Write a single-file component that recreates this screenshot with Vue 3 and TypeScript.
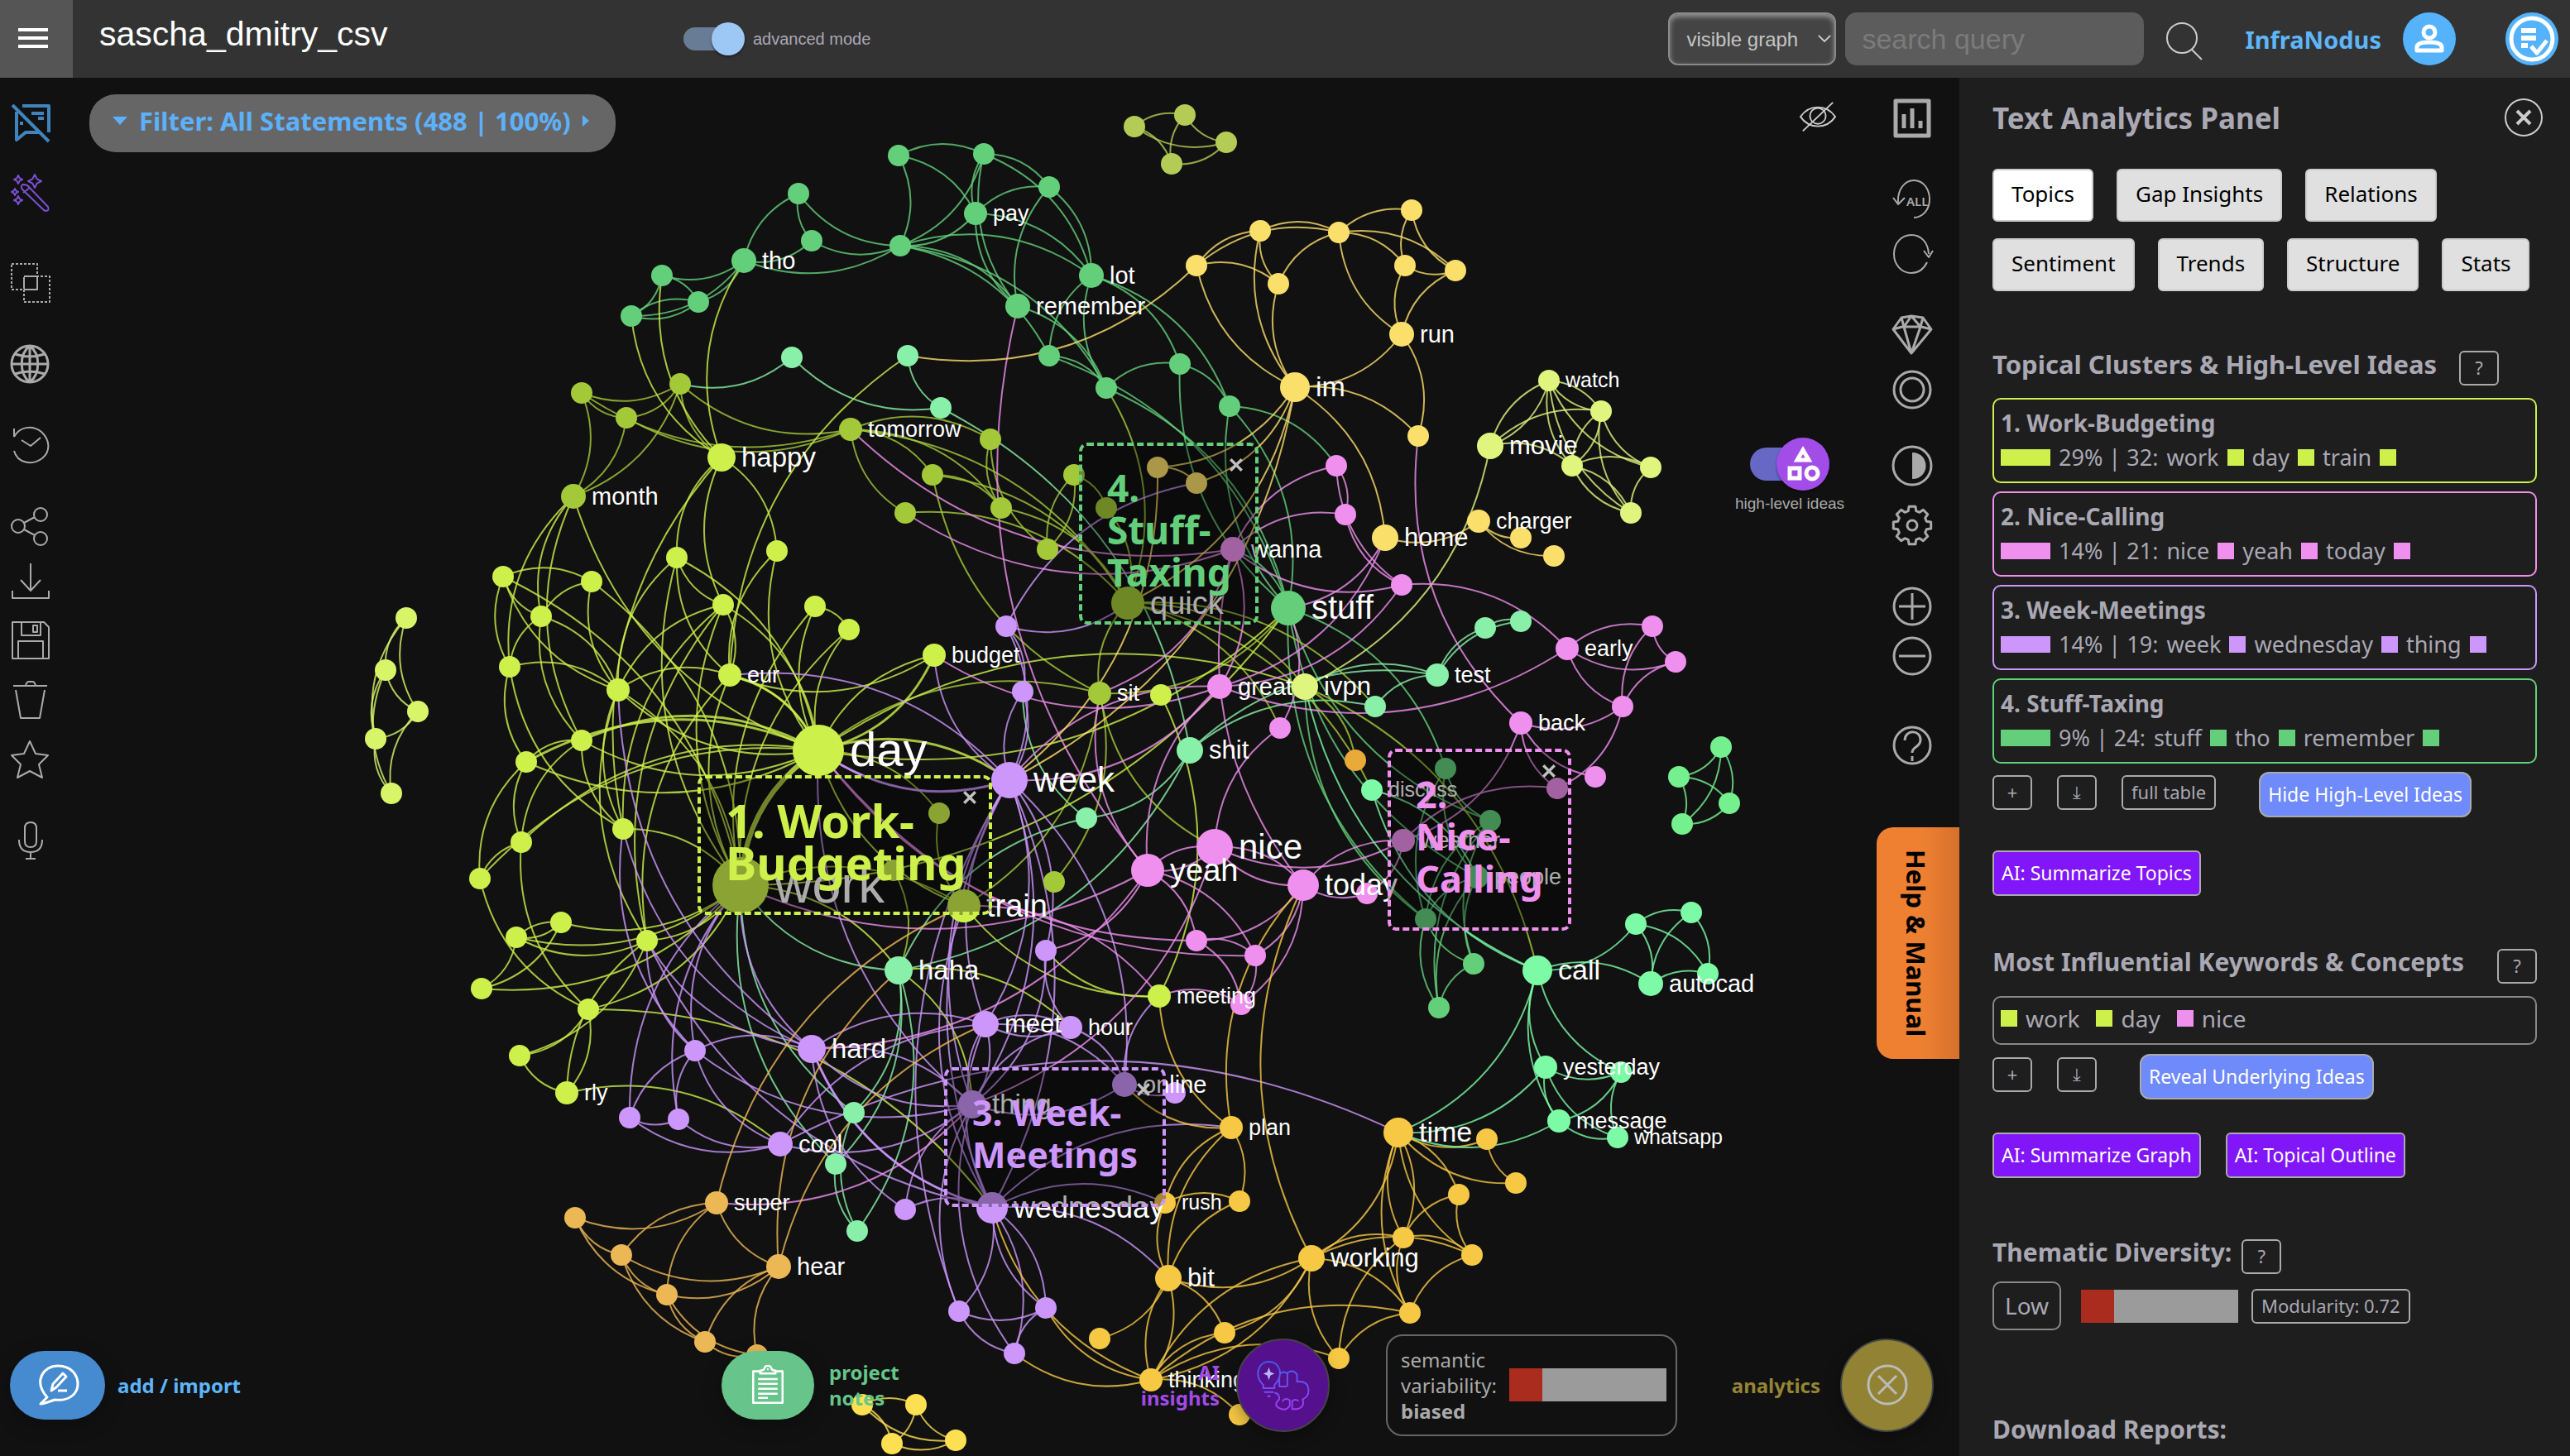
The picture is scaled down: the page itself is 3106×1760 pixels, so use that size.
<script setup lang="ts">
import { ref } from 'vue'

interface GraphNode { id: string; x: number; y: number; r: number; color: string; label?: string }
interface GraphEdge { d: string; color: string; w: number }
interface Tool { name: string; gap: string; d: string; dash?: string; fill?: string; text?: string; tone?: string; w?: number }
interface Cluster { title: string; share: string; words: string[]; color: string }

// Camera zoom applied to the layout coordinates of the graph.
const ZOOM = 1.981

const C = {
  olive: '#a4c938', lime: '#cdf04b', green: '#64cf7b', mint: '#88f0a8', aqua: '#7cfaa6',
  yellow: '#fbdf6b', lemon: '#dff57d', gold: '#f6c844', amber: '#ecb855', pink: '#ef8fee',
  violet: '#cc96fb', moss: '#b4cc55', pear: '#d8f56a', leaf: '#75f08f', orange: '#e9aa3a', sun: '#fde052',
}

// "id x y [radius label]" separated by commas, one list per community.
const layout: [string, string][] = [
  [C.moss, 'A1 692 77,A2 723 70,A3 748 87,A4 715 100'],
  [C.pear, 'c1 248 377,c2 235 409,c3 255 434,c4 229 451,c5 239 484'],
  [C.leaf, 'r1 1050 456,r2 1024 474,r3 1055 490,r4 1026 503'],
  [C.sun, 'b1 526 857,b2 559 857,b3 544 881,b4 583 879'],
  [C.green, 'g1 487 118,g2 495 147,tho 454 159 15 tho,g3 404 168,g4 426 184,g5 385 193,g6 548 95,g7 549 150,g8 600 94,pay 595 130 14 pay,g9 640 114,lot 666 168 15 lot,rem 621 187 15 remember,g10 640 217,g11 720 222,g12 675 237,g13 750 248,stuff 786 371 21 stuff,h1 882 469,h2 909 501,h3 901 535 14 people,h4 870 561,h5 899 588,h6 878 615'],
  [C.mint, 'm1 483 218,m2 554 217,m3 574 249,shit 726 458 16 shit,haha 548 592 17 haha,m4 663 499,m5 521 679,m6 510 710,m7 523 751,test 877 412 14 test,t1 906 383,t2 928 379,t3 839 431'],
  [C.olive, 'o1 415 234,o2 355 240,o3 382 255,month 350 303 15 month,tom 519 262 14 tomorrow,o5 569 290,o6 604 268,o7 552 313,o8 611 310,o9 655 290,o10 639 335,o11 675 310,quick 688 368 20 quick,sit 671 423 14 sit,o12 643 538'],
  [C.lime, 'happy 440 279 17 happy,l1 307 352,l2 361 355,l3 330 376,l4 311 407,l5 413 340,l6 474 336,l7 441 369,l8 497 370,l9 518 384,eur 445 412 14 eur,l10 377 421 14,budget 570 400 14 budget,day 499 458 31 day,l11 355 452,l12 321 465,l13 318 514,l14 380 506,l15 293 536,l16 342 563,l17 315 572,l18 395 574,l19 294 603,l20 359 616,l21 317 644,rly 346 667 14 rly,work 452 540 34 work,train 588 553 20 train,l22 573 496,l24 545 531,l23 708 424,meeting 707 608 14 meeting'],
  [C.lemon, 'ivpn 796 419 16 ivpn,watch 945 232 13 watch,v1 977 251,movie 909 272 16 movie,v2 959 284,v3 1007 285,v4 995 313'],
  [C.violet, 'u1 614 382,u2 624 422,week 616 476 22 week,u3 638 580,meet 601 625 16 meet,hour 653 627 14 hour,u4 717 667,online 686 662 15 online,thing 593 674 17 thing,wed 605 737 19 wednesday,hard 495 640 17 hard,u5 424 641,u6 384 682,u7 414 683,cool 476 698 15 cool,u8 552 738,u9 585 800,u10 638 798,u11 619 826'],
  [C.pink, 'p1 815 284,p2 821 314,wanna 752 335 15 wanna,p3 855 357,great 744 419 15 great,p4 781 444,early 956 396 14 early,p5 1008 382,p6 1022 404,p7 990 431,back 928 441 14 back,p8 973 474,p9 950 481,wea 856 513 14 weather,p10 834 545,yeah 700 531 20 yeah,nice 741 517 22 nice,today 795 540 19 today,p11 730 574,p12 766 583,p13 757 613'],
  [C.yellow, 'y1 730 162,y2 769 141,y3 817 142,y4 861 128,y5 857 162,y6 888 165,y7 780 173,run 855 204 15 run,im 790 236 18 im,y8 865 266,home 845 328 16 home,charger 902 318 14 charger,y9 928 328,y10 948 339,y11 706 285,y12 730 295'],
  [C.gold, 'time 853 691 18 time,k1 907 695,k2 925 722,k3 890 729,k4 898 766,working 800 768 16 working,k5 856 755,k6 860 801,k7 817 829,plan 751 688 14 plan,rush 711 734 13 rush,k8 756 733,bit 713 780 16 bit,k9 671 817,k10 747 813,think 702 842 14 thinking,k11 756 863'],
  [C.amber, 'super 437 734 14 super,q1 351 743,q2 379 766,q3 407 790,q4 430 819,q5 462 827,hear 475 773 15 hear'],
  [C.orange, 'f1 827 464'],
  [C.aqua, 'disc 837 482 13 discuss,call 938 592 18 call,e1 998 564,e2 1032 557,e3 1042 594,aut 1007 600 15 autocad,yes 943 651 14 yesterday,e4 989 654,msg 951 684 14 message,wh 987 694 13 whatsapp'],
]

const nodes: GraphNode[] = layout.flatMap(([color, list]) =>
  list.split(',').map((item) => {
    const [id, x, y, r, label] = item.split(' ')
    return { id, x: Math.round(+x * ZOOM), y: Math.round(+y * ZOOM), r: r ? +r : 13, color, label }
  }),
)
const byId = new Map(nodes.map((n) => [n.id, n]))

// "source>target" pairs; each curve bends to the left of its direction.
const links: [string, string, number?][] = [
  [C.moss, 'A1>A2 A3>A2 A3>A1 A1>A4 A4>A2 A3>A4'],
  [C.pear, 'c2>c1 c3>c1 c4>c1 c3>c2 c4>c2 c3>c4 c5>c4 c5>c2 c5>c3'],
  [C.leaf, 'r1>r2 r1>r3 r1>r4 r2>r3 r2>r4 r3>r4'],
  [C.sun, 'b1>b2 b1>b3 b4>b1 b2>b3 b4>b2 b4>b3'],
  [C.green, 'tho>g1 g2>g1 g7>g1 g7>g2 g2>tho g7>tho tho>g3 tho>g4 tho>g5 g3>g4 g3>g5 g5>g4 g4>g5 g6>g7 g6>g8 g6>pay pay>g8 rem>g8 g8>g9 g8>lot g9>lot pay>g9 pay>lot pay>g7 g8>g7 g7>lot g7>rem g7>g10 g7>g12 rem>g9 rem>pay g10>lot g12>lot lot>g11 lot>g13 g10>g12 rem>g12 g12>g11 g11>g13 g13>p1 stuff>g13 g13>stuff g12>stuff g10>stuff stuff>g11 wanna>stuff stuff>h1 h4>stuff h4>ivpn h2>h1 h3>h1 h2>stuff h3>stuff h4>h1 h4>h2 h4>h3 h6>h4 h6>h3 h6>h2 h5>h3 h5>h2 h5>h4 h6>h5'],
  [C.mint, 'm1>o1 m3>m1 m3>m2 m3>shit shit>m4 m4>u2 haha>m4 haha>m5 haha>m6 haha>m7 m5>work m6>work m7>m5 m7>m6 test>t1 test>t2 t1>t2 t3>test shit>t3 shit>test ivpn>test haha>work shit>haha'],
  [C.olive, 'o1>o2 o1>o3 o3>o2 tom>o1 tom>o3 tom>o2 happy>o1 o2>month o3>month o1>month tom>o6 tom>o5 o7>tom tom>o8 o5>o8 o8>o6 o8>quick o5>quick tom>quick o7>quick o10>o6 o9>o10 o10>o9 o11>quick o9>o11 sit>o5 quick>ivpn quick>t3 quick>disc ivpn>call ivpn>f1 sit>o12 sit>quick stuff>sit sit>train day>sit train>l22 work>train l24>haha nice>sit quick>p4 g12>quick day>l22'],
  [C.lime, 'happy>tho happy>g3 happy>g5 l5>happy l7>happy happy>l6 l14>happy eur>m2 l4>month l3>month day>month l11>month l1>l2 l3>l2 l3>l1 l4>l1 l4>l3 l4>l10 l3>l10 l10>l1 l10>l2 l1>work l2>work l14>l4 l12>l4 l11>l3 day>l11 day>l12 l12>l11 l13>l11 l13>l12 l15>l13 l15>l12 l14>l10 l14>l11 l18>l10 l10>eur l10>l7 l10>l5 l7>eur eur>l5 l7>l5 l18>l7 l14>l7 eur>l6 l5>day l7>day day>l6 day>l8 day>l9 l8>l9 eur>day l13>day l15>day day>l10 budget>eur day>budget l10>work work>l5 work>l7 work>l8 work>l9 work>eur l14>work work>l16 work>l17 work>l18 l18>l17 l17>l16 l16>l17 l17>l19 l16>l19 work>l19 work>l20 l18>l21 l20>l15 l20>l13 l20>l21 l20>rly rly>l18 rly>l21 rly>cool l18>eur l20>wed train>day work>haha meeting>train meeting>u3 l23>meeting stuff>day stuff>work day>ivpn haha>thing haha>hour'],
  [C.lime, 'l12>day l11>day eur>day day>week budget>day', 3],
  [C.lime, 'work>day', 6],
  [C.lemon, 'watch>v1 v1>watch movie>v1 movie>watch watch>movie movie>v2 v2>watch v3>watch v2>v3 v2>v4 v4>v2 v1>v2 v2>v1 v3>v1 v4>v1 v4>v3 v4>watch movie>ivpn'],
  [C.violet, 'u1>u2 u1>week u2>week week>u2 u1>y12 quick>u1 week>budget week>day thing>week week>thing wed>week week>wed week>online week>meet meet>week week>u3 u3>thing hour>u3 u5>hard cool>u6 cool>u7 u7>u6 u6>u5 u7>u5 cool>u5 thing>u5 hard>thing thing>hard wed>hard cool>time thing>cool u8>thing u8>hard u8>wed wed>plan wed>bit wed>rush u10>wed wed>u10 wed>u11 wed>u9 u9>thing u9>week u11>thing u10>u9 u11>u9 u11>u10 online>thing hour>online meet>online hour>meet meet>hour thing>hour thing>meet meet>thing wed>meet hard>work u5>work u6>work u7>work hard>l10 u5>l14 hard>l18 hard>l14 u5>l18 thing>day wed>l18 eur>week wed>train hard>meet cool>meet u4>online online>meeting'],
  [C.violet, 'wed>hard week>day', 3],
  [C.pink, 'wanna>p1 p1>p2 wanna>p2 p3>p2 p3>p1 p3>wanna p3>early p3>great home>great back>y8 early>p5 p6>p5 p6>early p7>p5 p7>p6 p7>early p7>back p7>p9 p9>back p8>back back>wea wea>p9 wea>nice today>wea early>great stuff>p4 nice>p4 yeah>great great>week great>budget nice>today today>nice yeah>nice nice>yeah p10>today wea>p10 p11>day p12>day p11>p12 today>p11 today>p12 yeah>p11 yeah>p12 p12>p13 p11>p13 today>p13 meeting>p13 wanna>tom wanna>o7 yeah>rem today>wanna wanna>great wanna>sit yeah>work yeah>u3 nice>thing thing>super yeah>hard week>great train>meeting home>stuff yeah>sit'],
  [C.yellow, 'y1>y2 y1>y3 y1>y7 y2>y3 y7>y2 im>y2 im>y7 im>y1 y7>y3 y3>y4 y3>y5 y3>y6 y5>y4 y6>y4 y6>y5 run>y5 run>y6 run>y3 run>im run>y8 im>y8 im>home im>y11 im>y12 im>week y11>week charger>home y9>charger y10>charger y11>y12 y1>m2 im>quick'],
  [C.gold, 'k1>time k2>time k2>k1 time>k3 k5>k3 k4>k3 k4>time k5>time k6>time k5>k4 working>k4 working>k5 time>working time>k5 k7>k5 k6>k5 k6>k4 working>k6 k7>working k7>k6 think>k6 think>k7 think>working working>think working>bit think>bit bit>think bit>k9 bit>k10 think>k10 working>k10 bit>plan rush>k8 plan>k8 bit>k8 bit>rush rush>plan plan>online plan>meeting plan>today working>today think>u10 think>wed think>u11 think>k11'],
  [C.amber, 'super>q1 q2>super q3>super hear>super hear>q2 hear>q3 q4>hear q5>hear q2>q1 q3>q1 q3>q2 q4>q2 q4>q3 q5>q3 q5>q4 super>train hear>haha hear>meet'],
  [C.aqua, 'e1>call call>aut e1>e2 e1>e3 e1>aut aut>e2 e2>e3 aut>e3 yes>call msg>call e4>call call>time yes>time msg>time e4>yes msg>yes wh>yes wh>msg wh>e4 e4>msg call>disc call>ivpn disc>h3'],
]

const edges: GraphEdge[] = links.flatMap(([color, pairs, w]) =>
  pairs.split(' ').flatMap((pair) => {
    const [s, t] = pair.split('>').map((id) => byId.get(id))
    if (!s || !t) return []
    const cx = Math.round((s.x + t.x) / 2 + (t.y - s.y) / 4)
    const cy = Math.round((s.y + t.y) / 2 + (s.x - t.x) / 4)
    return [{ d: `M${s.x} ${s.y}Q${cx} ${cy} ${t.x} ${t.y}`, color, w: w ?? 2 }]
  }),
)
const labelled = nodes.filter((n) => n.label)
const labelSize = (n: GraphNode) => Math.round(n.r * 1.8 + 2)

const ideas = [
  { text: ['1. Work-', 'Budgeting'], x: 843, y: 843, w: 356, size: 56, color: C.lime },
  { text: ['2.', 'Nice-', 'Calling'], x: 1677, y: 811, w: 222, size: 45, color: C.pink },
  { text: ['3. Week-', 'Meetings'], x: 1141, y: 1196, w: 268, size: 43, color: C.violet },
  { text: ['4.', 'Stuff-', 'Taxing'], x: 1304, y: 441, w: 217, size: 46, color: C.green },
]

const circle = (cx: number, cy: number, r: number) => `M${cx - r} ${cy}a${r} ${r} 0 1 0 ${2 * r} 0a${r} ${r} 0 1 0 ${-2 * r} 0z`

function gear(): string {
  const pts: string[] = []
  for (let i = 0; i < 8; i++) {
    const a = (i * Math.PI) / 4
    for (const [o, r] of [[-0.27, 18], [-0.17, 23], [0.17, 23], [0.27, 18]]) {
      pts.push(`${(24 + r * Math.sin(a + o)).toFixed(1)} ${(24 - r * Math.cos(a + o)).toFixed(1)}`)
    }
  }
  return `M${pts.join('L')}Z${circle(24, 24, 6)}`
}
const star = (x: number, y: number, r: number) => `M${x} ${y - r}L${x + r / 3} ${y - r / 3}L${x + r} ${y}L${x + r / 3} ${y + r / 3}L${x} ${y + r}L${x - r / 3} ${y + r / 3}L${x - r} ${y}L${x - r / 3} ${y - r / 3}Z`

const leftTools: Tool[] = [
  { name: 'Hide statements', gap: '', tone: 'blue', w: 4, d: 'M14 3H46V35M34 35H18L7 44V10M2 2L46 46M25 12H40M33 18H40M13 22V26' },
  { name: 'AI tools', gap: 'gap-l', tone: 'purple', d: `M13 17Q12 13 16 13L20 14L45 40Q47 45 42 45L40 44L14 19ZM15 23L23 17${star(29, 9, 8)}${star(9, 7, 5)}${star(5, 22, 4)}${star(9, 32, 5)}` },
  { name: 'Overlap', gap: 'gap-xxl', dash: '3 2', d: 'M1 1H32V32H1ZM16 16H47V47H16Z', fill: 'M17 15H31V17H17ZM17 31H31V33H17ZM15 17H17V31H15ZM31 17H33V31H31Z' },
  { name: 'Import from web', gap: 'gap-xl', w: 3, d: `${circle(23, 24, 22)}M23 2V46M1 24H45M23 2C10 12 10 36 23 46M23 2C36 12 36 36 23 46M5 12Q23 18 41 12M5 36Q23 30 41 36` },
  { name: 'History', gap: 'gap-xl', d: 'M4 4V14M4 14C10 2 26 -1 37 8C48 18 48 32 38 40C26 49 8 46 4 31M13 18L24 25L36 15' },
  { name: 'Share', gap: 'gap-xl', d: `${circle(9, 24, 8)}${circle(36, 10, 8)}${circle(36, 39, 8)}M16 20L29 13M16 28L29 35` },
  { name: 'Download', gap: 'gap-sm', d: 'M24 3V36M12 23L24 36L36 23M2 36V45H46V36' },
  { name: 'Save', gap: 'gap-m', d: 'M2 2H40L46 8V46H2ZM13 2V18H36V2M27 6H32V14H27ZM9 46V25H39V46' },
  { name: 'Delete', gap: 'gap-m', d: 'M3 7H44M18 7Q19 2 22 2H26Q29 2 30 7M6 12L12 46H35L41 12' },
  { name: 'Favourite', gap: 'gap-m', d: 'M23 2L30 17L45 19L34 30L38 46L23 38L8 46L12 30L1 19L16 17Z' },
  { name: 'Dictate', gap: 'gap-xl', d: 'M24 2Q31 2 31 9V25Q31 32 24 32Q17 32 17 25V9Q17 2 24 2ZM10 23Q10 38 24 38Q38 38 38 23M24 38V46M18 46H30' },
]
const rightTools: Tool[] = [
  { name: 'Charts', gap: '', w: 5, d: 'M4 3H44V45H4ZM14 19V36M24 12V36M34 27V36' },
  { name: 'Reset all', gap: 'gap-xl', text: 'ALL', d: 'M7 28C6 12 15 1 26 1C38 1 45 12 45 24C45 37 36 46 26 46M1 22L7 30L15 22' },
  { name: 'Redo', gap: 'gap-sm', d: 'M42 34C37 44 30 47 23 47C11 47 2 37 2 24C2 11 11 1 23 1C34 1 43 9 44 24M38 20L44 28L49 20' },
  { name: 'Reveal gems', gap: 'gap-xl', w: 3, d: 'M1 17L11 3L23 1L37 3L47 17L23 46ZM1 17L12 14H35L47 17M11 3L14 14L23 1L34 14L37 3M14 14L23 46L34 14' },
  { name: 'Focus', gap: 'gap-sm', w: 3, d: `${circle(24, 24, 22)}${circle(24, 24, 14)}` },
  { name: 'Contrast', gap: 'gap-lg', w: 3, d: circle(24, 24, 23), fill: 'M24 8C46 8 46 40 24 40Z' },
  { name: 'Settings', gap: 'gap-m', w: 3, d: gear() },
  { name: 'Zoom in', gap: 'gap-xl', w: 3, d: `${circle(24, 24, 22)}M8 24H40M24 8V40` },
  { name: 'Zoom out', gap: 'gap-s', w: 3, d: `${circle(24, 24, 22)}M8 24H40` },
  { name: 'Help', gap: 'gap-xxl', w: 3, d: `${circle(24, 24, 22)}M15 18C15 4 35 5 34 18C33 27 24 25 24 33M24 37V43` },
]

const clusters: Cluster[] = [
  { title: '1. Work-Budgeting', share: '29% | 32:', words: ['work', 'day', 'train'], color: C.lime },
  { title: '2. Nice-Calling', share: '14% | 21:', words: ['nice', 'yeah', 'today'], color: C.pink },
  { title: '3. Week-Meetings', share: '14% | 19:', words: ['week', 'wednesday', 'thing'], color: C.violet },
  { title: '4. Stuff-Taxing', share: '9% | 24:', words: ['stuff', 'tho', 'remember'], color: C.green },
]
const keywords = [['work', C.lime], ['day', C.lime], ['nice', C.pink]]
const tabs = [['Topics', 'Gap Insights', 'Relations'], ['Sentiment', 'Trends', 'Structure', 'Stats']]
const activeTab = ref('Topics')
const advanced = ref(true)
const highLevel = ref(true)
const scope = ref('visible graph')
const query = ref('')
</script>

<template>
  <div class="app">
    <header class="topbar">
      <button class="menu" aria-label="Menu"><i></i><i></i><i></i></button>
      <h1>sascha_dmitry_csv</h1>
      <label class="advanced"><input v-model="advanced" type="checkbox" class="switch"><span>advanced mode</span></label>
      <div class="search">
        <div class="select-wrap">
          <select v-model="scope" aria-label="Search scope"><option>visible graph</option></select>
          <svg viewBox="0 0 20 12" aria-hidden="true"><path d="M2 2L10 10L18 2" /></svg>
        </div>
        <input v-model="query" type="text" aria-label="Search query" placeholder="search query">
        <button class="bare magnifier" aria-label="Search"><svg viewBox="0 0 48 48"><circle cx="21" cy="21" r="18" /><path d="M33 35L45 47" /></svg></button>
      </div>
      <a href="#" class="brand">InfraNodus</a>
      <button class="round user" aria-label="Account">
        <svg viewBox="0 0 64 64"><circle cx="32" cy="24" r="7" /><path d="M17 46V42Q17 36 32 36Q47 36 47 42V46Z" /></svg>
      </button>
      <button class="round tasks" aria-label="Tasks">
        <svg viewBox="0 0 64 64"><circle cx="32" cy="32" r="25" stroke-width="5" /><path d="M19 22H37M19 31H37M19 40H27" stroke-width="6" /><path d="M31 41L38 49L50 34" stroke-width="5" /></svg>
      </button>
    </header>

    <div class="body">
      <main class="stage">
        <svg class="graph" viewBox="0 94 2368 1666" preserveAspectRatio="xMinYMin slice" role="img" aria-label="Word graph">
          <path v-for="(e, i) in edges" :key="i" :d="e.d" :stroke="e.color" :stroke-width="e.w" class="edge" />
          <circle v-for="n in nodes" :key="n.id" :cx="n.x" :cy="n.y" :r="n.r" :fill="n.color" />
          <text v-for="n in labelled" :key="n.id" :x="n.x + n.r + 7" :y="n.y + Math.round(labelSize(n) / 3)" :font-size="labelSize(n)">{{ n.label }}</text>
        </svg>

        <section v-for="idea in ideas" :key="idea.text[0]" class="idea"
          :style="{ left: idea.x + 'px', top: idea.y + 'px', width: idea.w + 'px', color: idea.color, fontSize: idea.size + 'px' }">
          <span v-for="line in idea.text" :key="line">{{ line }}</span>
          <button class="bare" :aria-label="'Close ' + idea.text.join(' ')"><svg viewBox="0 0 16 16"><path d="M2 2L14 14M14 2L2 14" /></svg></button>
        </section>

        <div class="overlay">
          <nav class="tools" aria-label="Graph tools">
            <button v-for="t in leftTools" :key="t.name" class="bare tool" :class="[t.gap, t.tone]" :aria-label="t.name">
              <svg viewBox="0 0 48 48"><path :d="t.d" :stroke-width="t.w ?? 2" :stroke-dasharray="t.dash" /><path v-if="t.fill" :d="t.fill" class="solid" /></svg>
            </button>
          </nav>
          <div class="middle">
            <button class="filter"><i class="down"></i>Filter: All Statements (488 | 100%)<i class="next"></i></button>
          </div>
          <div class="toggles">
            <button class="bare eye" aria-label="Hide interface">
              <svg viewBox="0 0 46 40"><path d="M1 20C12 4 34 4 45 20C34 36 12 36 1 20Z" /><circle cx="23" cy="19" r="10" /><path d="M4 38L42 2" /></svg>
            </button>
            <label class="ideas-toggle">
              <span class="knob-wrap">
                <input v-model="highLevel" type="checkbox" class="switch big">
                <svg viewBox="0 0 64 64" aria-hidden="true"><path d="M32 15L39 27H25Z" /><path d="M16 37H28V49H16Z" /><circle cx="43" cy="43" r="7" /></svg>
              </span>
              <span>high-level ideas</span>
            </label>
          </div>
          <nav class="tools right" aria-label="View tools">
            <button v-for="t in rightTools" :key="t.name" class="bare tool" :class="t.gap" :aria-label="t.name">
              <svg viewBox="0 0 48 48"><path :d="t.d" :stroke-width="t.w ?? 2" /><path v-if="t.fill" :d="t.fill" class="solid" /><text v-if="t.text" x="17" y="32" font-size="15">{{ t.text }}</text></svg>
            </button>
          </nav>
        </div>

        <button class="manual">Help &amp; Manual</button>

        <footer class="dock">
          <button class="action add">
            <span class="pill"><svg viewBox="0 0 52 52"><path d="M5 49L13 41C-4 22 8 3 26 3C43 3 50 15 50 25C50 38 38 46 22 44C17 46 12 48 5 49Z" /><path d="M18 33L20 25L32 12L36 16L24 29ZM26 33H37" /></svg></span>
            <span>add / import</span>
          </button>
          <button class="action notes">
            <span class="pill"><svg viewBox="0 0 52 56"><path d="M14 9H5V54H47V9H38M15 12V8Q20 8 21 5Q22 1 26 1Q30 1 31 5Q32 8 37 8V12ZM25 6H27M12 20H40M12 27H40M12 34H40M12 41H40M12 47H26" /></svg></span>
            <span>project<br>notes</span>
          </button>
          <button class="action insights">
            <span>AI<br>insights</span>
            <span class="disc"><svg viewBox="0 0 70 64">
              <defs><linearGradient id="glow" x1="0" y1="0" x2="0" y2="1"><stop offset="0" stop-color="#3b62f0" /><stop offset="1" stop-color="#a33bf2" /></linearGradient></defs>
              <path stroke="url(#glow)" d="M10 32C-2 20 4 3 17 3C31 3 36 20 24 32V36H10ZM11 41H23M15 46H19M31 18Q35 14 40 18V34M40 17Q47 12 52 19V28Q65 27 66 36Q68 46 59 50Q62 60 52 62H46V52Q50 49 54 52M30 24V34H39M24 42Q30 42 30 50Q22 57 30 61Q38 65 43 58V51Q36 47 34 53" />
              <path class="spark" d="M17 10L19 16L24 18L19 20L17 26L15 20L10 18L15 16Z" />
            </svg></span>
          </button>
          <section class="semantic">
            <p>semantic<br>variability:<br><b>biased</b></p>
            <div class="meter"><i></i></div>
          </section>
          <button class="action analytics">
            <span>analytics</span>
            <span class="disc"><svg viewBox="0 0 52 52"><circle cx="26" cy="26" r="23" /><path d="M15 15L37 37M37 15L15 37" /></svg></span>
          </button>
        </footer>
      </main>

      <aside class="panel">
        <div class="panel-head">
          <h2>Text Analytics Panel</h2>
          <button class="bare close" aria-label="Close panel"><svg viewBox="0 0 48 48"><circle cx="24" cy="24" r="22" /><path d="M16 16L32 32M32 16L16 32" stroke-width="4" /></svg></button>
        </div>
        <div v-for="(row, i) in tabs" :key="i" class="tabs">
          <button v-for="tab in row" :key="tab" :class="{ active: tab === activeTab }" @click="activeTab = tab">{{ tab }}</button>
        </div>

        <div class="section-head first"><h3>Topical Clusters &amp; High-Level Ideas</h3><button class="small" aria-label="About topical clusters">?</button></div>
        <article v-for="c in clusters" :key="c.title" class="cluster" :style="{ borderColor: c.color }">
          <h4>{{ c.title }}</h4>
          <p><i class="bar" :style="{ background: c.color }"></i>{{ c.share }}
            <template v-for="w in c.words" :key="w"><span>{{ w }}</span><i :style="{ background: c.color }"></i></template>
          </p>
        </article>
        <div class="actions">
          <button class="small">+</button><button class="small" aria-label="Download clusters">⤓</button><button class="small">full table</button>
          <button class="blue-btn">Hide High-Level Ideas</button>
        </div>
        <div class="ai"><button>AI: Summarize Topics</button></div>

        <div class="section-head spread"><h3>Most Influential Keywords &amp; Concepts</h3><button class="small" aria-label="About keywords">?</button></div>
        <p class="keywords"><template v-for="[word, color] in keywords" :key="word"><i :style="{ background: color }"></i><span>{{ word }}</span></template></p>
        <div class="actions">
          <button class="small">+</button><button class="small" aria-label="Download keywords">⤓</button>
          <button class="blue-btn">Reveal Underlying Ideas</button>
        </div>
        <div class="ai"><button>AI: Summarize Graph</button><button>AI: Topical Outline</button></div>

        <div class="section-head diversity"><h3>Thematic Diversity:</h3><button class="small" aria-label="About diversity">?</button></div>
        <div class="levels">
          <span class="low">Low</span>
          <div class="meter"><i></i></div>
          <button class="small">Modularity: 0.72</button>
        </div>
        <h3 class="reports">Download Reports:</h3>
      </aside>
    </div>
  </div>
</template>

<style>
body { margin: 0; background: #111; overflow: hidden; }
</style>

<style scoped>
* { box-sizing: border-box; }
.app { display: flex; flex-direction: column; height: 100vh; color: #aaa8b3; background: #111; font-family: "Noto Sans", sans-serif; }
h1, h2, h3, h4, p { margin: 0; }
button, input, select { font-family: inherit; cursor: pointer; }
svg { display: block; fill: none; stroke-linejoin: round; }
.bare { padding: 0; border: 0; background: none; }

.topbar { display: flex; align-items: center; height: 94px; flex: none; background: #333; padding-right: 14px; font-family: "Liberation Sans", sans-serif; }
.menu { align-self: stretch; width: 88px; padding: 0 30px 2px 22px; border: 0; background: #555; display: flex; flex-direction: column; justify-content: center; gap: 6px; }
.menu i { height: 4px; background: #fff; }
.topbar h1 { flex: 0 0 706px; margin-left: 32px; padding-bottom: 12px; font-weight: 400; font-size: 41px; line-height: 48px; color: #fff; }
.advanced { display: flex; align-items: center; gap: 10px; font-size: 20px; }
.switch { appearance: none; position: relative; width: 74px; height: 40px; margin: 0; }
.switch::before { content: ""; position: absolute; left: 0; top: 6px; width: 60px; height: 28px; border-radius: 14px; background: #687c95; }
.switch::after { content: ""; position: absolute; right: 0; top: 0; width: 40px; height: 40px; border-radius: 50%; background: #9dc8f5; box-shadow: 0 2px 3px #0006; }
.search { margin-left: auto; display: flex; align-items: center; gap: 11px; }
.select-wrap { position: relative; }
.select-wrap select { appearance: none; width: 203px; height: 64px; padding: 0 20px; border: 2px solid #8a8a8a; border-radius: 12px; background: #444; box-shadow: inset 0 3px 6px #999; color: #c4c4c4; font-size: 24px; }
.select-wrap svg { position: absolute; right: 5px; top: 26px; width: 18px; stroke: #ccc; stroke-width: 2; }
.search > input { width: 361px; height: 64px; padding: 0 20px; border: 0; border-radius: 14px; background: #5c5c5c; color: #ddd; font-size: 34px; }
.search > input::placeholder { color: #7b7b7b; opacity: 1; }
.magnifier { margin: 4px 0 0 14px; }
.magnifier svg { width: 48px; stroke: #ccc; stroke-width: 2; }
.brand { margin-left: 49px; color: #5db5fa; text-decoration: none; font: 700 29px "Noto Sans", sans-serif; }
.round { width: 64px; height: 64px; padding: 0; border: 0; border-radius: 50%; background: #55b3fb; stroke: #fff; }
.round svg { width: 64px; height: 64px; stroke-width: 5; }
.user { margin-left: 26px; }
.tasks { margin-left: 60px; }

.body { display: flex; flex: 1; min-height: 0; }
.stage { position: relative; flex: 1; min-width: 0; overflow: hidden; background: #111; }
.graph { position: absolute; inset: 0; width: 100%; height: 100%; }
.graph text { fill: #fff; font-family: "Liberation Sans", sans-serif; }
.edge { fill: none; stroke-opacity: 0.8; }
.idea { position: absolute; display: flex; flex-direction: column; padding: 25px 30px 34px; border: 4px dashed currentColor; border-radius: 10px; background: rgba(0, 0, 0, 0.32); font-weight: 700; line-height: 51px; white-space: nowrap; }
.idea button { position: absolute; right: 14px; top: 14px; }
.idea svg { width: 18px; stroke: #c0c0c0; stroke-width: 3; }

.overlay { position: relative; display: flex; align-items: flex-start; color: #aaa; }
.tools { display: flex; flex-direction: column; width: 108px; padding: 29px 0 0 11px; }
.tools.right { width: 83px; padding: 23px 0 0; }
.tool { width: 52px; height: 52px; display: grid; place-items: center; color: #aaa; }
.tool svg { width: 48px; height: 48px; stroke: currentColor; overflow: visible; }
.tool .solid { fill: currentColor; stroke: none; }
.tool text { fill: currentColor; stroke: none; font-weight: 600; font-family: "Noto Sans", sans-serif; }
.tool.blue { color: #3f84bd; }
.tool.purple { color: #7c50d2; }
.gap-s { margin-top: 8px; }
.gap-sm { margin-top: 14px; }
.gap-m { margin-top: 20px; }
.gap-l { margin-top: 33px; }
.gap-lg { margin-top: 40px; }
.gap-xl { margin-top: 46px; }
.gap-xxl { margin-top: 56px; }
.middle { flex: 1; padding-top: 20px; }
.filter { display: flex; align-items: center; gap: 14px; height: 70px; padding: 0 32px 6px 28px; border: 0; border-radius: 32px; background: #666; color: #5db0fa; font-size: 31px; font-weight: 700; }
.filter i { border: 9px solid transparent; }
.filter .down { border-top-color: #5db0fa; border-bottom: 0; border-top-width: 10px; }
.filter .next { border-left-color: #5db0fa; border-right: 0; border-width: 7px 0 7px 8px; }
.toggles { display: flex; flex-direction: column; align-items: center; width: 136px; margin-right: 54px; padding-top: 28px; }
.eye { margin-left: 68px; }
.eye svg { width: 44px; stroke: #ccc; stroke-width: 2; }
.ideas-toggle { display: flex; flex-direction: column; align-items: center; gap: 5px; margin-top: 369px; font: 19px/22px "Liberation Sans", sans-serif; white-space: nowrap; }
.knob-wrap { position: relative; height: 64px; }
.knob-wrap svg { position: absolute; right: 0; top: 0; width: 64px; stroke: #fff; stroke-width: 5; stroke-linejoin: miter; }
.switch.big { width: 96px; height: 64px; display: block; }
.switch.big::before { top: 12px; height: 40px; border-radius: 20px; background: #6768c6; }
.switch.big::after { width: 64px; height: 64px; background: #a24de8; }

.manual { position: absolute; right: 0; top: 906px; width: 100px; height: 280px; padding: 0 4px 0 0; border: 0; border-radius: 20px 0 0 20px; background: linear-gradient(90deg, #ef8032 55%, #d6712c); color: #000; font-weight: 700; font-size: 31px; writing-mode: vertical-rl; }

.dock { position: absolute; inset: auto 0 0; height: 172px; padding: 0 31px 0 12px; display: grid; grid-template-columns: 860fr 503fr 232fr 420fr 310fr; align-items: center; }
.action { display: flex; align-items: center; padding: 0; border: 0; background: none; font-size: 24px; font-weight: 700; line-height: 31px; text-align: left; gap: 15px; }
.pill { display: grid; place-items: center; width: 115px; height: 83px; border-radius: 42px; background: #468bd0; box-shadow: 0 6px 24px #0004; }
.pill svg { width: 52px; stroke: #fff; stroke-width: 3; }
.disc { display: grid; place-items: center; width: 113px; height: 113px; border: 2px solid #444; border-radius: 50%; background: #55118d; box-shadow: 0 6px 20px #0005; }
.disc svg { width: 68px; stroke-width: 2; }
.add { color: #5db5fa; }
.notes { color: #65c68a; gap: 18px; }
.notes .pill { width: 112px; background: #67c48a; }
.notes svg { width: 44px; }
.insights { justify-self: end; gap: 20px; text-align: right; color: #a24ae8; }
.spark { fill: #b9b4ff; stroke: none; }
.semantic { justify-self: end; display: flex; align-items: center; justify-content: space-between; width: 352px; height: 123px; padding: 0 11px 0 16px; border: 2px solid #666; border-radius: 20px; color: #aaa; font-size: 24px; line-height: 31px; }
.meter { width: 190px; height: 40px; background: #9b9b9b; }
.meter i { display: block; width: 21%; height: 100%; background: #aa2c1f; }
.analytics { justify-self: end; gap: 24px; color: #948635; }
.analytics .disc { background: #918333; }
.analytics svg { width: 52px; stroke: #bbb; stroke-width: 3; }

.panel { flex: 0 0 738px; padding: 24px 40px 0; background: #1e1e1e; overflow: hidden; font-size: 28px; line-height: 42px; }
.panel-head { display: flex; justify-content: space-between; align-items: center; margin-bottom: 38px; }
.panel h2 { padding-top: 2px; font-size: 35px; line-height: 46px; }
.close { margin-right: -8px; }
.close svg { width: 48px; stroke: #ccc; stroke-width: 2; }
.tabs { display: flex; gap: 28px; margin-bottom: 20px; }
.tabs button { height: 64px; padding: 0 21px 4px; border: 2px solid #ccc; border-radius: 6px; background: #e0e0e0; color: #000; font-size: 26px; white-space: nowrap; }
.tabs button.active { background: #fff; }
.section-head { display: flex; align-items: flex-start; gap: 27px; height: 57px; white-space: nowrap; }
.section-head h3 { font-size: 31px; line-height: 32px; }
.first { margin-top: 72px; }
.spread { margin-top: 64px; justify-content: space-between; gap: 0; }
.spread h3, .diversity h3, .reports { font-size: 30px; }
.diversity { margin-top: 74px; gap: 12px; height: 51px; }
.small { flex: none; min-width: 48px; height: 42px; padding: 0 10px 2px; border: 2px solid #aaa; border-radius: 6px; background: none; color: #aaa8b3; font-size: 22px; white-space: nowrap; }
.cluster { height: 103px; margin-bottom: 10px; padding: 7px 8px 0; border: 2px solid; border-radius: 10px; }
.cluster h4 { font-size: 28px; line-height: 42px; }
.cluster p { display: flex; align-items: center; gap: 10px; font-size: 27px; line-height: 42px; white-space: nowrap; }
.cluster i, .keywords i { width: 20px; height: 20px; }
.cluster i.bar { width: 60px; }
.actions { display: flex; align-items: flex-start; gap: 30px; margin-bottom: 40px; }
.actions .small { margin-top: 4px; }
.blue-btn, .ai button { height: 55px; padding: 0 9px 2px; border: 2px solid #aaa; border-radius: 12px; background: #6f8afb; color: #fff; font-size: 23px; white-space: nowrap; }
.blue-btn { margin-left: 22px; }
.ai { display: flex; gap: 30px; }
.ai button { border-radius: 6px; background: #8117f8; }
.keywords { display: flex; align-items: center; gap: 10px; height: 59px; margin-bottom: 11px; padding: 0 8px 6px; border: 2px solid #888; border-radius: 10px; }
.keywords span { margin-right: 10px; }
.levels { display: flex; align-items: center; height: 59px; }
.low { height: 59px; padding: 6px 13px; border: 2px solid #888; border-radius: 10px; }
.levels .meter { margin: 0 16px 0 24px; }
.reports { margin-top: 102px; line-height: 36px; white-space: nowrap; }
</style>
